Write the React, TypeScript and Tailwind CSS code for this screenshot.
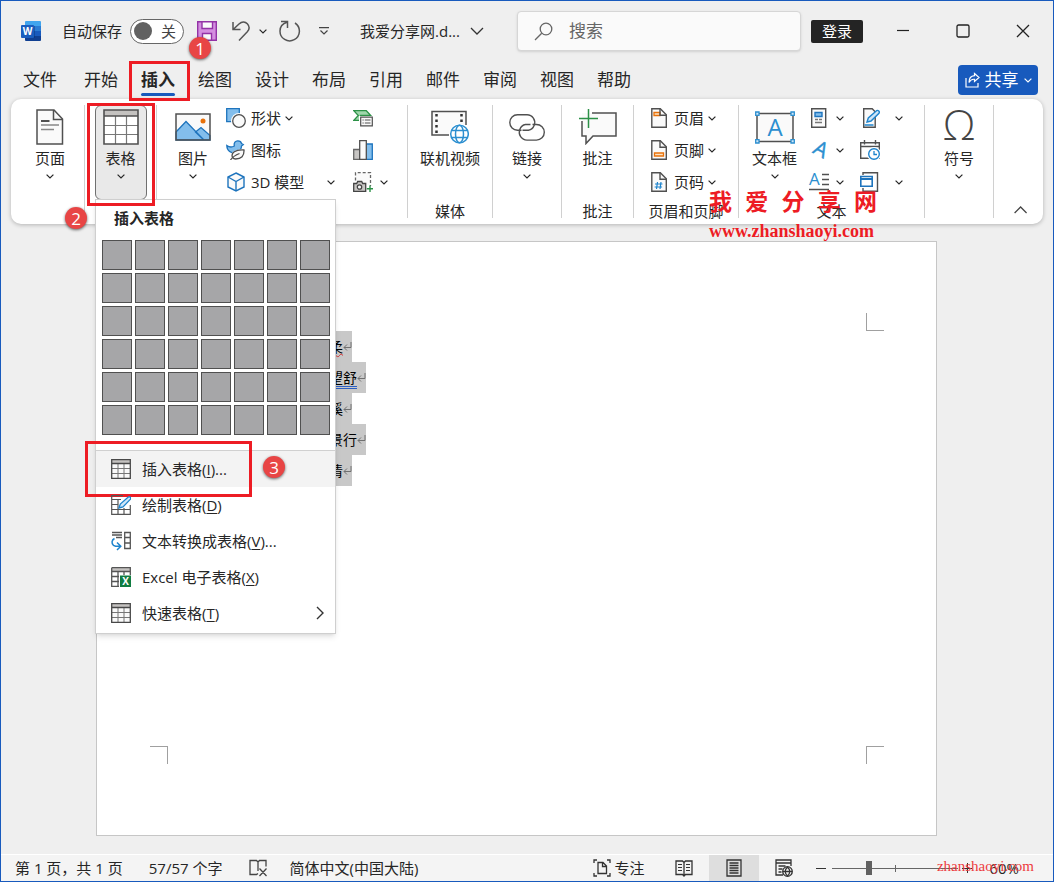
import { useState, type ReactNode } from "react";

const tabs = ["开始", "插入", "绘图", "设计", "布局", "引用", "邮件", "审阅", "视图", "帮助"];

const docLines: { text: string; mark?: "spell" | "grammar" }[] = [
  { text: "柔", mark: "spell" },
  { text: "望舒", mark: "grammar" },
  { text: "溪" },
  { text: "景行" },
  { text: "清" },
];

function Chevron({ large = false }: { large?: boolean }) {
  return large ? (
    <svg width="14" height="8" viewBox="0 0 14 8" fill="none" stroke="#333" strokeWidth="1.3" className="shrink-0">
      <path d="M1 1l6 6 6-6" />
    </svg>
  ) : (
    <svg width="8" height="5" viewBox="0 0 8 5" fill="none" stroke="currentColor" strokeWidth="1.2" className="shrink-0">
      <path d="M.6.6L4 4 7.4.6" />
    </svg>
  );
}

/* ---------- title bar icons ---------- */

function WordLogo() {
  return (
    <svg width="20" height="20" viewBox="0 0 20 20" className="shrink-0">
      <path d="M5 0h14a1 1 0 011 1v4H4V1a1 1 0 011-1z" fill="#41a5ee" />
      <path d="M4 5h16v5H4z" fill="#2b7cd3" />
      <path d="M4 10h16v5H4z" fill="#185abd" />
      <path d="M4 15h16v4a1 1 0 01-1 1H5a1 1 0 01-1-1z" fill="#103f91" />
      <rect x="5" y="5" width="9" height="12" fill="#0b2f6b" opacity=".4" />
      <rect x="0" y="4" width="13" height="13" rx="1" fill="#1a5dbe" />
      <text x="6.5" y="14" textAnchor="middle" fontSize="10" fontWeight="700" fontFamily="Open Sans, sans-serif" fill="#fff">W</text>
    </svg>
  );
}

function SaveIcon() {
  return (
    <svg width="20" height="20" viewBox="0 0 20 20" stroke="#9333a6" strokeWidth="1.4">
      <path d="M.7.7h18.6v18.6H3.2L.7 16.8z" fill="#d48fe0" />
      <path d="M5 .7h10.5v6.8H5z" fill="#fafafa" />
      <path d="M5.5 19.3v-6.8h9v6.8z" fill="#fafafa" />
    </svg>
  );
}

function UndoIcon() {
  return (
    <svg width="18" height="20" viewBox="0 0 18 20" fill="none" stroke="#555" strokeWidth="1.5">
      <path d="M1 1v7.5h7.5M1.4 8.2L7 3c3-2.8 6.4-2.2 8.3-.2 2.1 2.2 2.3 5.4 0 8L7 19.400" />
    </svg>
  );
}

function RedoIcon() {
  return (
    <svg width="22" height="22" viewBox="0 0 22 22" fill="none" stroke="#555" strokeWidth="1.5">
      <path d="M2 1.5h6.5V8M8 2.2C3.5 3.5 1 7 1 11a9.7 9.7 0 1015-8" />
    </svg>
  );
}

function SearchIcon() {
  return (
    <svg width="19" height="19" viewBox="0 0 19 19" fill="none" stroke="#666" strokeWidth="1.3">
      <circle cx="12" cy="7" r="5.8" />
      <path d="M7.7 11.3L1 18" />
    </svg>
  );
}

function ShareIcon() {
  return (
    <svg width="15" height="16" viewBox="0 0 15 16" fill="none" stroke="#fff" strokeWidth="1.2">
      <path d="M1 6v9h12v-4M9.5 1.5l4.5 4-4.5 4V7.3C6.5 7 5 8.5 4 10.5 4 6.5 6 4 9.5 3.7z" />
    </svg>
  );
}

/* ---------- ribbon icons ---------- */

function PageIcon() {
  return (
    <svg width="28" height="36" viewBox="0 0 28 36" fill="none" stroke="#505050" strokeWidth="1.5">
      <path d="M1 1h17l8.5 9v25H1z" fill="#fafafa" />
      <path d="M17.5 1v9.5h9" />
      <path d="M5 12h8.5" strokeWidth="2" />
      <path d="M5 16h18M5 20.5h13" stroke="#888" />
    </svg>
  );
}

function TableIcon({ size = 20 }: { size?: number }) {
  return size > 30 ? (
    <svg width="36" height="36" viewBox="0 0 36 36" fill="none">
      <path d="M1 1h34v34H1z" fill="#fff" />
      <path d="M1 1h34v6H1z" fill="#c4c2c0" />
      <path d="M12.5 7v28M23.5 7v28M1 16.500h34M1 25.500h34" stroke="#777" strokeWidth="1.2" />
      <path d="M1 7h34M1 1h34v34H1z" stroke="#505050" strokeWidth="1.6" />
    </svg>
  ) : (
    <svg width="20" height="20" viewBox="0 0 20 20" fill="none">
      <path d="M.7.7h18.6v18.6H.7z" fill="#fafafa" />
      <path d="M1 1h18v3H1z" fill="#c4c2c0" />
      <path d="M7 4v15M13 4v15M1 9.500h18M1 14.500h18" stroke="#777" />
      <path d="M1 4.500h18M.7.7h18.6v18.6H.7z" stroke="#484848" strokeWidth="1.3" />
    </svg>
  );
}

function PictureIcon() {
  return (
    <svg width="36" height="28" viewBox="0 0 36 28">
      <path d="M1 1h34v26H1z" fill="#fafafa" />
      <circle cx="28" cy="8" r="2.500" fill="#e8710a" />
      <path d="M1 19L11 8.500 29 27H1zM20.500 19l5.500-4.500 9 8V27h-6z" fill="#83beec" stroke="#1e74bd" strokeWidth="1.3" />
      <path d="M1 1h34v26H1z" fill="none" stroke="#505050" strokeWidth="1.5" />
    </svg>
  );
}

function ShapesIcon() {
  return (
    <svg width="20" height="20" viewBox="0 0 20 20" strokeWidth="1.3">
      <path d="M.7.7h12.6v13H.7z" fill="#83beec" stroke="#1e74bd" />
      <circle cx="13" cy="13" r="8" fill="#fff" />
      <circle cx="13" cy="13" r="6.300" fill="#fafafa" stroke="#505050" />
    </svg>
  );
}

function IconsIcon() {
  return (
    <svg width="20" height="20" viewBox="0 0 20 20" strokeWidth="1.3">
      <path d="M.8 5.500c2 1.500 5 2 7.500.5C7.500 2.500 9.500.8 11.800.8c2 0 3.400 1 3.700 2.700l1.800 1-1.800 1.500c0 3-1.500 5.500-5.500 7-5 .5-9-2-9.200-7.500z" fill="#83beec" stroke="#1e74bd" />
      <path d="M4 20c-1-6 3-11 15-11 .5 7-2 11-9 11z" fill="#fff" />
      <path d="M6.500 17.500c-2-5 3-8 11.500-7.500.3 6-2.500 9-8.500 9-1.200 0-2.200-.5-3-1.500zM4.500 20c2-3 5-5 9-6.500" fill="#fafafa" stroke="#505050" />
    </svg>
  );
}

function CubeIcon() {
  return (
    <svg width="20" height="20" viewBox="0 0 20 20" fill="#fafafa" stroke="#1e74bd" strokeWidth="1.4">
      <path d="M10 1l8 4v10l-8 4-8-4V5z" />
      <path d="M2 5l8 4.500L18 5M10 9.500V19" fill="none" />
    </svg>
  );
}

function SmartArtIcon() {
  return (
    <svg width="20" height="18" viewBox="0 0 20 18">
      <path d="M.8 1.700h12.500l4.500 4.800H7.500v4.800H.8l4.500-4.800z" fill="#9fd7ab" stroke="#2c9147" strokeWidth="1.3" />
      <path d="M6 7h14v11H6z" fill="#fff" />
      <path d="M7.700 8.200h11.600v8.600H7.700z" fill="#fafafa" stroke="#505050" strokeWidth="1.2" />
      <path d="M9.500 11h1.200M11.800 11h5.700M9.500 14h1.200M11.800 14h5.700" stroke="#505050" />
    </svg>
  );
}

function ChartIcon() {
  return (
    <svg width="20" height="20" viewBox="0 0 20 20" strokeWidth="1.3">
      <path d="M.7 9.500h6v9.800h-6z" fill="#c8c6c4" stroke="#666" />
      <path d="M13.300 4h6v15.300h-6z" fill="#83beec" stroke="#1e74bd" />
      <path d="M6.700.7h6.600v18.600H6.700z" fill="#fafafa" stroke="#505050" />
    </svg>
  );
}

function ScreenshotIcon() {
  return (
    <svg width="20" height="20" viewBox="0 0 20 20" fill="none">
      <path d="M2.500 8.500v-7.800h15V14" fill="#fafafa" stroke="#666" strokeWidth="1.3" strokeDasharray="3 2" />
      <path d="M.7 11.500h3l1-2h4l1 2h3v8H.7z" fill="#c8c6c4" stroke="#444" strokeWidth="1.3" />
      <circle cx="6.500" cy="15" r="2.200" fill="#fafafa" stroke="#444" strokeWidth="1.3" />
      <path d="M17 13.500v6.500M13.800 16.800h6.200" stroke="#2c9147" strokeWidth="1.4" />
    </svg>
  );
}

function VideoIcon() {
  return (
    <svg width="38" height="34" viewBox="0 0 38 34" fill="none">
      <path d="M1 2h34v23H1z" fill="#fafafa" />
      <path d="M18 25H1V1.500h34V15" stroke="#505050" strokeWidth="1.5" />
      <path d="M5.500 4v20M30.500 4v10" stroke="#333" strokeWidth="2.5" strokeDasharray="2.500 3" />
      <circle cx="28.500" cy="24" r="10.500" fill="#fff" />
      <g stroke="#2c8fd0" strokeWidth="1.5">
        <circle cx="28.500" cy="24" r="8.800" fill="#fff" />
        <ellipse cx="28.500" cy="24" rx="4" ry="8.800" />
        <path d="M20.500 20.500h16M20.500 27.500h16" />
      </g>
    </svg>
  );
}

function LinkIcon() {
  return (
    <svg width="36" height="27" viewBox="0 0 36 27" fill="none" stroke="#505050" strokeWidth="1.4">
      <path d="M12.500 16.200H8.500a7.700 7.700 0 010-15.400H18a7.700 7.700 0 017.200 10.500c-.9 2.500-3 4.500-5.700 4.900h-6" />
      <path d="M23.500 10.500h4a7.800 7.800 0 010 15.600H18a7.800 7.800 0 01-7.200-10.600c.9-2.500 3-4.600 5.700-5h5" />
    </svg>
  );
}

function CommentIcon() {
  return (
    <svg width="38" height="36" viewBox="0 0 38 36" fill="none">
      <path d="M3 4h34v23H15l-8 8v-8H3z" fill="#fafafa" />
      <path d="M13 4h24v23H14l-7 7.500V27H3V12" stroke="#505050" strokeWidth="1.5" />
      <path d="M9.500 0v19M0 9.500h19" stroke="#2c9147" strokeWidth="1.5" />
    </svg>
  );
}

function DocIcon({ kind }: { kind: "header" | "footer" | "number" }) {
  return (
    <svg width="16" height="20" viewBox="0 0 16 20" fill="none" className="mr-[2px]">
      <path d="M.8.8h8.500l6 6v12.500H.8z" fill="#fafafa" stroke="#505050" strokeWidth="1.4" />
      {kind === "header" && <path d="M3 4.500h6v3H3z" fill="#fde3c3" stroke="#e8710a" strokeWidth="1.3" />}
      <path d="M9 .8v6.400h6.400" stroke="#505050" strokeWidth="1.4" />
      {kind === "footer" && <path d="M3.500 13h9v3h-9z" fill="#fde3c3" stroke="#e8710a" strokeWidth="1.3" />}
      {kind === "number" && <path d="M6.500 10l-1 7M10 10l-1 7M4 12h7.500M3.600 15h7.500" stroke="#1e84cd" strokeWidth="1.2" />}
    </svg>
  );
}

function TextBoxIcon() {
  return (
    <svg width="40" height="33" viewBox="0 0 40 33">
      <path d="M2 2.500h36v28H2z" fill="#fafafa" stroke="#505050" strokeWidth="1.5" />
      <g fill="#cfe6f8" stroke="#2c8fd0" strokeWidth="1.3">
        <path d="M.7 1h3.300v3.300H.7zM36 1h3.300v3.300H36zM.7 28.700h3.300V32H.7zM36 28.700h3.300V32H36z" />
      </g>
      <text x="20" y="25" textAnchor="middle" fontSize="24" fontFamily="Open Sans, sans-serif" fill="#2c8fd0">A</text>
    </svg>
  );
}

function QuickPartsIcon() {
  return (
    <svg width="20" height="20" viewBox="0 0 20 20" fill="none">
      <path d="M2.700.7h14v18.600h-14z" fill="#fafafa" stroke="#505050" strokeWidth="1.4" />
      <path d="M6 4.500h7v4H6z" fill="#83beec" stroke="#1e74bd" strokeWidth="1.4" />
      <path d="M6 11.500h3M6 14.500h7M10 11.500h3" stroke="#777" strokeWidth="1.4" />
    </svg>
  );
}

function WordArtIcon() {
  return (
    <svg width="20" height="20" viewBox="0 0 20 20" className="overflow-visible">
      <text x="8.500" y="15.500" textAnchor="middle" fontSize="21" fontFamily="Open Sans, sans-serif" fill="#2c8fd0" stroke="#2c8fd0" strokeWidth=".4" transform="rotate(28 8.5 15.5)">A</text>
    </svg>
  );
}

function DropCapIcon() {
  return (
    <svg width="20" height="20" viewBox="0 0 20 20" className="overflow-visible">
      <text x="0" y="13" fontSize="17" fontFamily="Open Sans, sans-serif" fill="#2c8fd0">A</text>
      <path d="M13 2.500h7M13 7.500h7M13 12.500h7M0 17.500h20" stroke="#505050" strokeWidth="1.3" />
    </svg>
  );
}

function SignatureIcon() {
  return (
    <svg width="20" height="20" viewBox="0 0 20 20" fill="none">
      <path d="M3.700.7h8.500l3 3v15.600H3.700z" fill="#fafafa" stroke="#505050" strokeWidth="1.4" />
      <path d="M7 14l1.300-4 8.200-7.300c1.700-1 3.500.8 2.500 2.500L11 13z" fill="#cfe6f8" stroke="#1e84cd" strokeWidth="1.4" />
      <path d="M4.500 17h9" stroke="#1e84cd" strokeWidth="1.5" />
    </svg>
  );
}

function DateIcon() {
  return (
    <svg width="20" height="20" viewBox="0 0 20 20" fill="none">
      <path d="M.7 2.700h18.600v15.600H.7zM.7 6.500h18.600M4.500 0v4.500M15.500 0v4.500" stroke="#505050" strokeWidth="1.4" />
      <circle cx="14" cy="14" r="7" fill="#fff" />
      <circle cx="14" cy="14" r="5.300" fill="#fff" stroke="#1e84cd" strokeWidth="1.4" />
      <path d="M14 11v3.500h3" stroke="#1e84cd" strokeWidth="1.3" />
    </svg>
  );
}

function ObjectIcon() {
  return (
    <svg width="20" height="20" viewBox="0 0 20 20" fill="none">
      <path d="M3 3V.7h14.500v18.600H3V16" stroke="#505050" strokeWidth="1.4" />
      <path d="M.8 4.500h11.400v9.700H.8z" fill="#fff" stroke="#1e74bd" strokeWidth="1.6" />
      <path d="M1 7h11" stroke="#1e74bd" strokeWidth="2" />
    </svg>
  );
}

function OmegaIcon() {
  return (
    <svg width="32" height="36" viewBox="0 0 32 36" className="overflow-visible">
      <text x="16" y="31" textAnchor="middle" fontSize="42" fontWeight="300" fontFamily="Open Sans, sans-serif" fill="#444">Ω</text>
    </svg>
  );
}

/* ---------- table menu icons ---------- */

function DrawTableIcon() {
  return (
    <svg width="20" height="20" viewBox="0 0 20 20" fill="none">
      <path d="M12 .7H.7v18.600h18.600V10M.7 4.500H10M7 4.500v15M.7 9.500H7M.7 14.500h18.600M13 13v6" stroke="#555" strokeWidth="1.2" />
      <path d="M8 13l1.300-4 8-7c1.500-1 3 .8 2.200 2.200L12 12z" fill="#cfe6f8" stroke="#1e84cd" strokeWidth="1.3" />
    </svg>
  );
}

function ConvertIcon() {
  return (
    <svg width="20" height="20" viewBox="0 0 20 20" fill="none">
      <path d="M1 1.500h10M1 4h10M5 6.500h6" stroke="#555" strokeWidth="1.3" />
      <path d="M13.700 1.500h5.600v16h-5.600zM13.700 6.500h5.600M13.700 12h5.600" stroke="#555" strokeWidth="1.3" />
      <path d="M3.500 7.500C.5 9 .3 12.500 2.500 14.300c1.500 1 3.500 1.200 7 1M6 11.500l3.800 3.800L6 19" stroke="#1e84cd" strokeWidth="1.5" />
    </svg>
  );
}

function ExcelIcon() {
  return (
    <svg width="20" height="20" viewBox="0 0 20 20" fill="none">
      <path d="M1 1h18v3H1z" fill="#c4c2c0" />
      <path d="M.7.7h18.600V8M.7.700v18.600H8M.7 4.500h18.600M7 4.500v15M13 4.500V8M.7 9.500H8M.7 14.500H8" stroke="#555" strokeWidth="1.3" />
      <path d="M9 8.500h11V20H9z" fill="#107c41" />
      <text x="14.500" y="18" textAnchor="middle" fontSize="10" fontWeight="700" fontFamily="Open Sans, sans-serif" fill="#fff">X</text>
    </svg>
  );
}

/* ---------- building blocks ---------- */

function Badge({ n, className }: { n: number; className: string }) {
  return (
    <span className={`absolute z-40 flex size-[22px] items-center justify-center rounded-full bg-[#e84545] font-['Open_Sans'] text-[17px] leading-none text-white shadow-[0_1px_3px_rgba(0,0,0,0.6)] ${className}`}>
      {n}
    </span>
  );
}

function Group({ label, className, children }: { label?: string; className: string; children: ReactNode }) {
  return (
    <section className={`relative flex shrink-0 flex-col justify-between border-r border-[#d0d0d0] ${className}`}>
      {children}
      {label && <h2 className="text-center leading-[14px] whitespace-nowrap">{label}</h2>}
    </section>
  );
}

function BigButton({ icon, label, menu = false, active = false }: { icon: ReactNode; label: string; menu?: boolean; active?: boolean }) {
  return (
    <button
      className={
        active
          ? "flex h-[95px] w-[52px] flex-col items-center self-center rounded-md border border-[#707070] bg-[#e9e9e9]"
          : "flex h-[95px] flex-col items-center self-center border border-transparent"
      }
    >
      <span className="flex h-[42px] items-center">{icon}</span>
      <span className="leading-5 whitespace-nowrap">{label}</span>
      {menu && <span className="flex h-4 items-center"><Chevron /></span>}
    </button>
  );
}

function SmallButton({ icon, label, menu = false, wide = false }: { icon: ReactNode; label?: string; menu?: boolean; wide?: boolean }) {
  return (
    <button className={`flex h-[26px] items-center leading-6 whitespace-nowrap ${wide ? "w-full justify-between" : ""}`}>
      <span className="flex items-center gap-[5px]">
        {icon}
        {label}
      </span>
      {menu && <span className="pl-1"><Chevron /></span>}
    </button>
  );
}

function IconButton({ icon, label, menu = false }: { icon: ReactNode; label: string; menu?: boolean }) {
  return (
    <button aria-label={label} className="flex h-[26px] items-center gap-[7px]">
      {icon}
      {menu && <Chevron />}
    </button>
  );
}

function MenuItem({ icon, label, accel, tail = "", sub = false, active = false, children }: {
  icon: ReactNode;
  label: string;
  accel: string;
  tail?: string;
  sub?: boolean;
  active?: boolean;
  children?: ReactNode;
}) {
  return (
    <div className="relative">
      <button role="menuitem" className={`flex h-9 w-full items-center px-[15px] ${active ? "bg-[#f3f3f3]" : ""}`}>
        {icon}
        <span className="ml-[11px]">{label}(<u className="underline-offset-2">{accel}</u>){tail}</span>
        {sub && (
          <svg width="8" height="14" viewBox="0 0 8 14" fill="none" stroke="#333" strokeWidth="1.4" className="mr-[-4px] ml-auto">
            <path d="M1 1l6 6-6 6" />
          </svg>
        )}
      </button>
      {children}
    </div>
  );
}

function TableMenu() {
  return (
    <div role="menu" className="absolute top-[94px] left-[10px] z-20 w-[241px] border border-[#cfcfcf] bg-white pb-[2px] shadow-md">
      <h3 className="h-10 pl-[18px] text-[15px] leading-9 font-bold">插入表格</h3>
      <div className="grid grid-cols-[repeat(7,30px)] gap-[3px] px-[6px]">
        {Array.from({ length: 42 }, (_, i) => (
          <button key={i} aria-label={`${(i % 7) + 1}x${Math.floor(i / 7) + 1}`} className="size-[30px] border border-[#505050] bg-[#a6a6a8]" />
        ))}
      </div>
      <div className="mt-[15px] border-t border-[#d0d0d0]">
        <MenuItem icon={<TableIcon />} label="插入表格" accel="I" tail="..." active>
          <span className="absolute top-[-10px] left-[-11px] h-14 w-[167px] border-3 border-[#ed1c24]" />
          <Badge n={3} className="top-[5px] left-[167px]" />
        </MenuItem>
        <MenuItem icon={<DrawTableIcon />} label="绘制表格" accel="D" />
        <MenuItem icon={<ConvertIcon />} label="文本转换成表格" accel="V" tail="..." />
        <MenuItem icon={<ExcelIcon />} label="Excel 电子表格" accel="X" />
        <MenuItem icon={<TableIcon />} label="快速表格" accel="T" sub />
      </div>
    </div>
  );
}

function TitleBar() {
  const [autoSave, setAutoSave] = useState(false);
  return (
    <header className="flex h-[60px] items-center pl-5 text-[15px]">
      <WordLogo />
      <label htmlFor="autosave" className="ml-[21px] whitespace-nowrap">自动保存</label>
      <span className="relative ml-2 flex h-[25px] w-[54px] shrink-0 items-center">
        <input
          id="autosave"
          type="checkbox"
          role="switch"
          checked={autoSave}
          onChange={(e) => setAutoSave(e.target.checked)}
          className="peer size-full appearance-none rounded-full border border-[#666] bg-white"
        />
        <span className="pointer-events-none absolute left-1 size-[18px] rounded-full bg-[#616161] peer-checked:left-8" />
        <span className="pointer-events-none absolute left-[31px] text-[15px] text-[#444] peer-checked:left-2">{autoSave ? "开" : "关"}</span>
      </span>
      <span className="relative ml-[13px] flex">
        <button aria-label="保存"><SaveIcon /></button>
        <Badge n={1} className="top-4 -left-2" />
      </span>
      <button aria-label="撤消" className="ml-[15px] flex items-center gap-[9px]"><UndoIcon /><Chevron /></button>
      <button aria-label="重复" className="ml-3"><RedoIcon /></button>
      <button aria-label="自定义快速访问工具栏" className="ml-[18px]">
        <svg width="10" height="8" viewBox="0 0 10 8" fill="none" stroke="#444" strokeWidth="1.2">
          <path d="M0 .6h10M1.500 3.500L5 7l3.500-3.500" />
        </svg>
      </button>
      <button className="ml-[31px] flex items-center gap-[10px] whitespace-nowrap">我爱分享网.d...<Chevron large /></button>
      <label className="ml-[33px] flex h-10 min-w-40 flex-1 items-center gap-4 rounded border border-[#d6d6d6] bg-[#fafafa] px-4 shadow-sm">
        <SearchIcon />
        <input type="search" placeholder="搜索" aria-label="搜索" className="min-w-0 flex-1 bg-transparent text-[17px] outline-none placeholder:text-[#666]" />
      </label>
      <button className="ml-[10px] h-[23px] w-[52px] shrink-0 rounded-xs bg-[#242424] leading-[22px] text-white">登录</button>
      <div className="ml-[10px] flex shrink-0">
        <button aria-label="最小化" className="flex h-10 w-15 items-center justify-center">
          <svg width="12" height="12" viewBox="0 0 12 12" stroke="#222" strokeWidth="1.2"><path d="M0 5.500h12" /></svg>
        </button>
        <button aria-label="最大化" className="flex h-10 w-15 items-center justify-center">
          <svg width="14" height="14" viewBox="0 0 14 14" fill="none" stroke="#222" strokeWidth="1.3"><rect x="1" y="1" width="12" height="12" rx="1.500" /></svg>
        </button>
        <button aria-label="关闭" className="flex h-10 w-15 items-center justify-center">
          <svg width="14" height="14" viewBox="0 0 14 14" stroke="#222" strokeWidth="1.3"><path d="M1 1l12 12M13 1L1 13" /></svg>
        </button>
      </div>
    </header>
  );
}

function TabRow() {
  return (
    <nav className="flex h-[38px] items-center pr-[15px] pl-[22px] text-[17px] leading-6">
      <button className="mr-[27px]">文件</button>
      <div className="flex h-full flex-1 items-center gap-[23px]">
        {tabs.map((t) =>
          t === "插入" ? (
            <span key={t} className="relative flex h-full items-center">
              <button className="font-bold">{t}</button>
              <span className="absolute inset-x-0 bottom-[3px] h-[3px] rounded-full bg-[#185abd]" />
              <span className="absolute top-0 left-[-12px] z-30 h-10 w-[61px] border-3 border-[#ed1c24]" />
            </span>
          ) : (
            <button key={t}>{t}</button>
          )
        )}
      </div>
      <button className="flex h-[30px] w-20 items-center justify-center gap-[5px] rounded bg-[#185abd] text-white">
        <ShareIcon />
        共享
        <Chevron />
      </button>
    </nav>
  );
}

function Ribbon() {
  return (
    <div className="relative mx-[10px] flex h-[125px] rounded-[10px] bg-white py-[6px] text-[15px] shadow-[0_1px_4px_rgba(0,0,0,0.25)]">
      <Group className="w-[74px] pl-[5px]">
        <BigButton icon={<PageIcon />} label="页面" menu />
        <Badge n={2} className="top-[102px] left-[54px]" />
      </Group>
      <Group className="w-[72px]">
        <BigButton icon={<TableIcon size={36} />} label="表格" menu active />
        <TableMenu />
        <span className="absolute top-[-2px] left-[2px] z-30 h-[103px] w-[68px] border-3 border-[#ed1c24]" />
      </Group>
      <Group className="w-[251px]">
        <div className="flex pl-[17px]">
          <BigButton icon={<PictureIcon />} label="图片" menu />
          <div className="ml-[14px] flex w-[109px] flex-col gap-[6px]">
            <SmallButton icon={<ShapesIcon />} label="形状" menu />
            <SmallButton icon={<IconsIcon />} label="图标" />
            <SmallButton icon={<CubeIcon />} label="3D 模型" menu wide />
          </div>
          <div className="ml-[18px] flex flex-col gap-[6px]">
            <IconButton icon={<SmartArtIcon />} label="SmartArt" />
            <IconButton icon={<ChartIcon />} label="图表" />
            <IconButton icon={<ScreenshotIcon />} label="屏幕截图" menu />
          </div>
        </div>
      </Group>
      <Group label="媒体" className="w-[85px]">
        <BigButton icon={<VideoIcon />} label="联机视频" />
      </Group>
      <Group className="w-[69px]">
        <BigButton icon={<LinkIcon />} label="链接" menu />
      </Group>
      <Group label="批注" className="w-[72px]">
        <BigButton icon={<CommentIcon />} label="批注" />
      </Group>
      <Group label="页眉和页脚" className="w-[105px]">
        <div className="flex flex-col gap-[6px] pl-[17px]">
          <SmallButton icon={<DocIcon kind="header" />} label="页眉" menu />
          <SmallButton icon={<DocIcon kind="footer" />} label="页脚" menu />
          <SmallButton icon={<DocIcon kind="number" />} label="页码" menu />
        </div>
      </Group>
      <Group label="文本" className="w-[186px]">
        <div className="flex pl-3">
          <BigButton icon={<TextBoxIcon />} label="文本框" menu />
          <div className="ml-[11px] flex flex-col gap-[6px]">
            <IconButton icon={<QuickPartsIcon />} label="文档部件" menu />
            <IconButton icon={<WordArtIcon />} label="艺术字" menu />
            <IconButton icon={<DropCapIcon />} label="首字下沉" menu />
          </div>
          <div className="ml-4 flex w-[43px] flex-col gap-[6px]">
            <button aria-label="签名行" className="flex h-[26px] items-center justify-between"><SignatureIcon /><Chevron /></button>
            <button aria-label="日期和时间" className="flex h-[26px] items-center"><DateIcon /></button>
            <button aria-label="对象" className="flex h-[26px] items-center justify-between"><ObjectIcon /><Chevron /></button>
          </div>
        </div>
        <div className="absolute top-[82px] left-[-30px] text-[#ed1c24]">
          <p className="flex w-[168px] justify-between text-[23px] leading-7 font-bold">
            <span>我</span><span>爱</span><span>分</span><span>享</span><span>网</span>
          </p>
          <p className="font-['Liberation_Serif'] text-[18px] leading-8 font-bold">www.zhanshaoyi.com</p>
        </div>
      </Group>
      <Group className="w-[69px]">
        <BigButton icon={<OmegaIcon />} label="符号" menu />
      </Group>
      <button aria-label="折叠功能区" className="ml-auto self-end pr-4 pb-1">
        <svg width="13" height="8" viewBox="0 0 13 8" fill="none" stroke="#444" strokeWidth="1.3"><path d="M.6 7l6-6 6 6" /></svg>
      </button>
    </div>
  );
}

function DocumentPage() {
  return (
    <main className="mt-[17px] mb-[18px] flex flex-1 justify-center pr-[21px]">
      <article className="relative min-h-[480px] w-full max-w-[841px] border border-[#c6c6c6] bg-white pt-[89px] pl-[232px]">
        <span className="absolute top-[71px] left-[53px] size-[18px] border-r border-b border-[#a0a0a0]" />
        <span className="absolute top-[71px] right-[52px] size-[18px] border-b border-l border-[#a0a0a0]" />
        <span className="absolute bottom-[71px] left-[53px] size-[18px] border-t border-r border-[#a0a0a0]" />
        <span className="absolute right-[52px] bottom-[71px] size-[18px] border-t border-l border-[#a0a0a0]" />
        {docLines.map((l) => (
          <p key={l.text} className="flex h-[31px] w-fit items-center bg-[#c8c8c8] text-[14px] leading-5 text-black">
            <span
              className={
                l.mark === "spell"
                  ? "underline decoration-[#d13438] decoration-wavy decoration-1 underline-offset-1"
                  : l.mark === "grammar"
                    ? "underline decoration-[#2b5fc4] decoration-double decoration-1 underline-offset-3"
                    : ""
              }
            >
              {l.text}
            </span>
            <svg width="9" height="9" viewBox="0 0 9 9" fill="none" stroke="#707070">
              <path d="M8 0v5.500H1M4 2.500l-3 3 3 3" />
            </svg>
          </p>
        ))}
      </article>
    </main>
  );
}

function StatusBar() {
  const [zoom, setZoom] = useState(28);
  return (
    <footer className="relative flex h-[27px] items-center border-t border-white bg-[#f4f4f4] pl-[14px] text-[15px] whitespace-nowrap">
      <span>第 1 页，共 1 页</span>
      <span className="ml-[26px]">57/57 个字</span>
      <button aria-label="校对" className="ml-[27px]">
        <svg width="19" height="18" viewBox="0 0 19 18" fill="none" stroke="#444" strokeWidth="1.3">
          <path d="M9 14.500L7.500 15.500H1V1.500h6.500L9 3v9M9 3l1.500-1.500H17V7.500M10.500 9.500l7 7.500M17.500 9.500l-7 7.500" />
        </svg>
      </button>
      <span className="ml-[21px]">简体中文(中国大陆)</span>
      <button className="ml-auto flex items-center gap-[3px]">
        <svg width="18" height="18" viewBox="0 0 18 18" fill="none" stroke="#333" strokeWidth="1.3">
          <path d="M4 1H1v3M14 1h3v3M1 14v3h3M17 14v3h-3M5 3.500h5l3.500 3.500v7.500H5zM9.500 3.500V7.500h4" />
        </svg>
        专注
      </button>
      <button aria-label="阅读视图" className="ml-[15px] flex w-[50px] justify-center">
        <svg width="18" height="17" viewBox="0 0 18 17" fill="none" stroke="#333" strokeWidth="1.3">
          <path d="M9 2.500L7.500 1H1v13.500h6.500L9 16l1.500-1.500H17V1h-6.500zM9 2.500v13" />
          <path d="M3 4.500h4M3 7.500h4M3 10.500h4M11 4.500h4M11 7.500h4M11 10.500h4" strokeWidth="1.2" />
        </svg>
      </button>
      <button aria-label="页面视图" className="flex h-full w-[50px] items-center justify-center bg-[#dedede]">
        <svg width="16" height="18" viewBox="0 0 16 18" fill="none" stroke="#333" strokeWidth="1.3">
          <path d="M1 1h14v16H1zM3.500 4h9M3.500 6.500h9M3.500 9h9M3.500 11.500h9M3.500 14h9" />
        </svg>
      </button>
      <button aria-label="Web 版式视图" className="flex w-[50px] justify-center">
        <svg width="18" height="18" viewBox="0 0 18 18" fill="none" stroke="#333" strokeWidth="1.3">
          <path d="M8 16H1V1h15v6M1 4h15M3.500 7h7M3.500 10h4M3.500 13h3" />
          <circle cx="12.500" cy="12.500" r="4.800" fill="#f4f4f4" />
          <path d="M8 12.500h9M12.500 8c-3 3-3 6 0 9M12.500 8c3 3 3 6 0 9" />
        </svg>
      </button>
      <button aria-label="缩小" className="ml-[7px] h-4 w-[10px]"><span className="block h-px bg-[#333]" /></button>
      <span className="relative ml-[6px] flex w-[126px] items-center">
        <input
          type="range"
          aria-label="缩放"
          value={zoom}
          onChange={(e) => setZoom(Number(e.target.value))}
          className="h-[14px] w-full appearance-none bg-[linear-gradient(#666,#666)] bg-[length:100%_1px] bg-center bg-no-repeat [&::-webkit-slider-thumb]:h-[14px] [&::-webkit-slider-thumb]:w-[6px] [&::-webkit-slider-thumb]:appearance-none [&::-webkit-slider-thumb]:bg-[#616161]"
        />
        <span className="absolute left-1/2 h-[7px] w-px bg-[#666]" />
      </span>
      <button aria-label="放大" className="ml-1">
        <svg width="10" height="10" viewBox="0 0 10 10" stroke="#333"><path d="M0 5.500h10M5.500 0v10" /></svg>
      </button>
      <span className="mr-[34px] ml-[17px]">60%</span>
      <span className="absolute right-[19px] bottom-[5px] font-['Liberation_Serif'] text-[15px] leading-5 text-[#ed3b40]">zhanshaoyi.com</span>
    </footer>
  );
}

export default function App() {
  return (
    <div className="flex min-h-screen flex-col border border-[#185abd] bg-[#efefef] font-['Open_Sans','Noto_Sans_CJK_SC',sans-serif] text-[#262626]">
      <TitleBar />
      <TabRow />
      <Ribbon />
      <DocumentPage />
      <StatusBar />
    </div>
  );
}
